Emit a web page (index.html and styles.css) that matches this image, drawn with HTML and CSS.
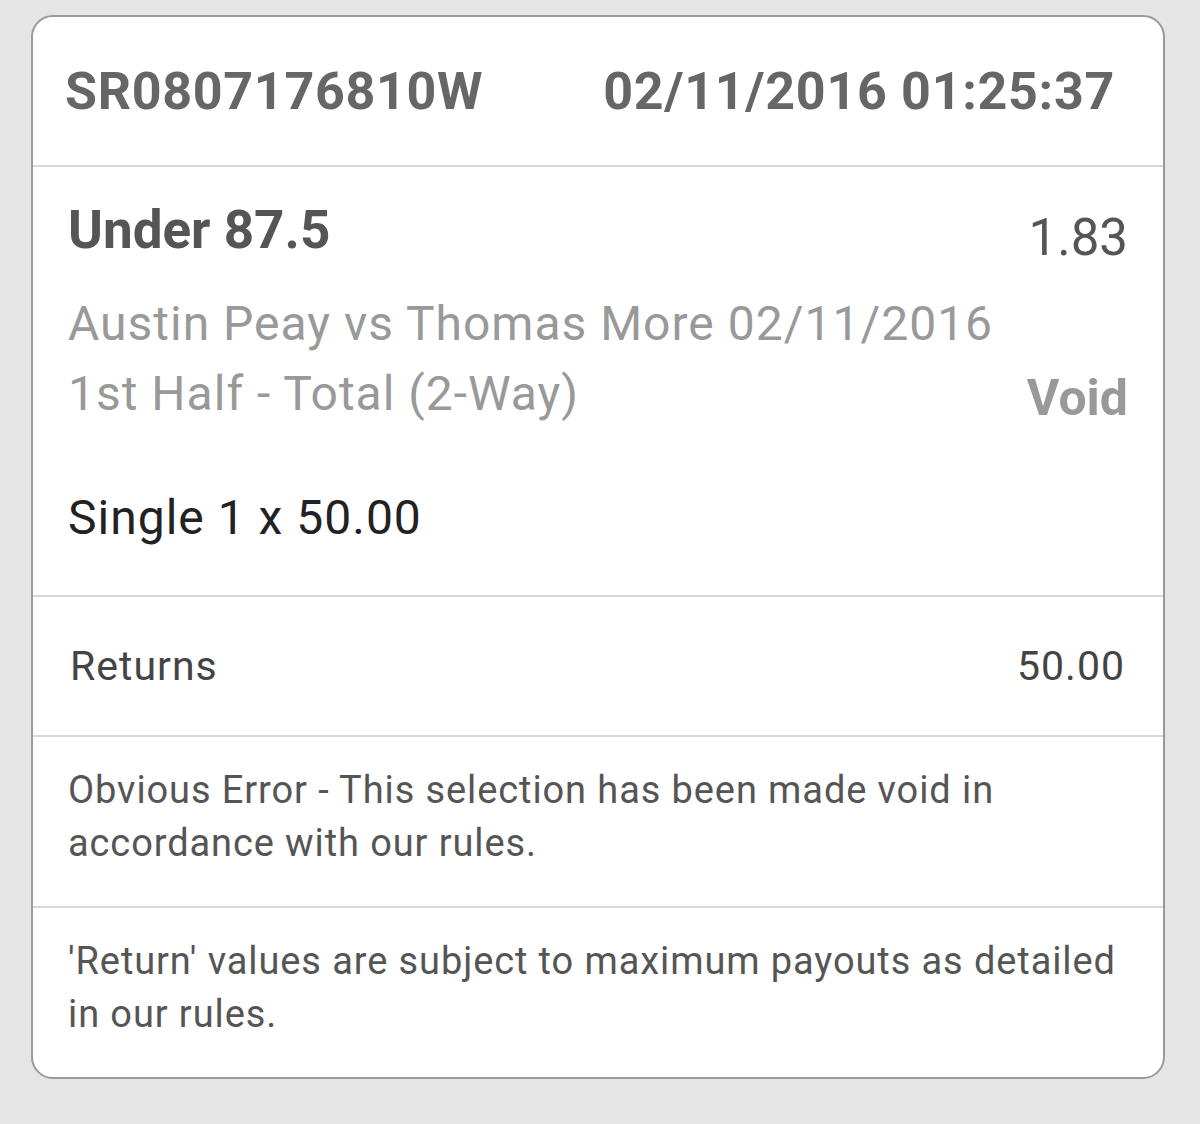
FILE: index.html
```html
<!DOCTYPE html>
<html lang="en">
<head>
    <meta charset="UTF-8">
    <meta name="viewport" content="width=device-width, initial-scale=1.0">
    <title>Bet Receipt</title>
    <link rel="stylesheet" href="styles.css">
</head>
<body>

<div class="bet-card">
    <header class="bet-header">
        <span class="bet-ref">SR0807176810W</span>
        <span class="bet-date">02/11/2016 01:25:37</span>
    </header>

    <section class="bet-selection">
        <div class="selection-top">
            <div class="selection-name">Under 87.5</div>
            <div class="selection-odds">1.83</div>
        </div>
        <div class="selection-event">
            <div class="event-lines">
                <div>Austin Peay vs Thomas More 02/11/2016</div>
                <div>1st Half - Total (2-Way)</div>
            </div>
            <div class="selection-status">Void</div>
        </div>
        <div class="bet-stake">Single 1 x 50.00</div>
    </section>

    <section class="bet-returns">
        <span>Returns</span>
        <span>50.00</span>
    </section>

    <section class="bet-note">
        Obvious Error - This selection has been made void in<br>
        accordance with our rules.
    </section>

    <section class="bet-note last">
        'Return' values are subject to maximum payouts as detailed<br>
        in our rules.
    </section>
</div>

</body>
</html>
```

FILE: styles.css
```css
* {
    margin: 0;
    padding: 0;
    box-sizing: border-box;
    font-family: Roboto, "Noto Sans", Arial, sans-serif;
}

body {
    background-color: #e5e5e5;
    padding: 15px 35px 0 31px;
    min-height: 100vh;
}

.bet-card {
    background-color: white;
    border: 2px solid #9a9a9a;
    border-radius: 22px;
}

.bet-header {
    display: flex;
    justify-content: space-between;
    align-items: center;
    height: 150px;
    padding: 0 48px 0 32px;
    font-size: 52px;
    font-weight: bold;
    letter-spacing: 0.7px;
    color: #666;
    border-bottom: 2px solid #d8d8d8;
}

.bet-selection {
    padding: 23px 35px 42px 35px;
    border-bottom: 2px solid #d8d8d8;
}

.selection-top {
    display: flex;
    justify-content: space-between;
    align-items: flex-start;
}

.selection-name {
    font-size: 53px;
    font-weight: bold;
    line-height: 80px;
    color: #555;
}

.selection-odds {
    font-size: 51px;
    line-height: 80px;
    margin-top: 8px;
    color: #555;
}

.selection-event {
    display: flex;
    justify-content: space-between;
    align-items: flex-end;
    margin-top: 11px;
    font-size: 48px;
    line-height: 70px;
    letter-spacing: 1px;
    color: #999;
}

.selection-status {
    font-size: 50px;
    font-weight: bold;
    letter-spacing: 0;
    margin-bottom: -4px;
}

.bet-stake {
    margin-top: 54px;
    font-size: 48px;
    line-height: 70px;
    letter-spacing: 1px;
    color: #222;
}

.bet-returns {
    display: flex;
    justify-content: space-between;
    height: 140px;
    line-height: 138px;
    padding: 0 38px 0 37px;
    font-size: 41px;
    letter-spacing: 1px;
    color: #444;
    border-bottom: 2px solid #d8d8d8;
}

.bet-note {
    padding: 27px 35px 36px 35px;
    font-size: 38px;
    line-height: 53px;
    letter-spacing: 0.9px;
    color: #555;
    border-bottom: 2px solid #d8d8d8;
}

.bet-note.last {
    padding-bottom: 36px;
    border-bottom: none;
}
```
